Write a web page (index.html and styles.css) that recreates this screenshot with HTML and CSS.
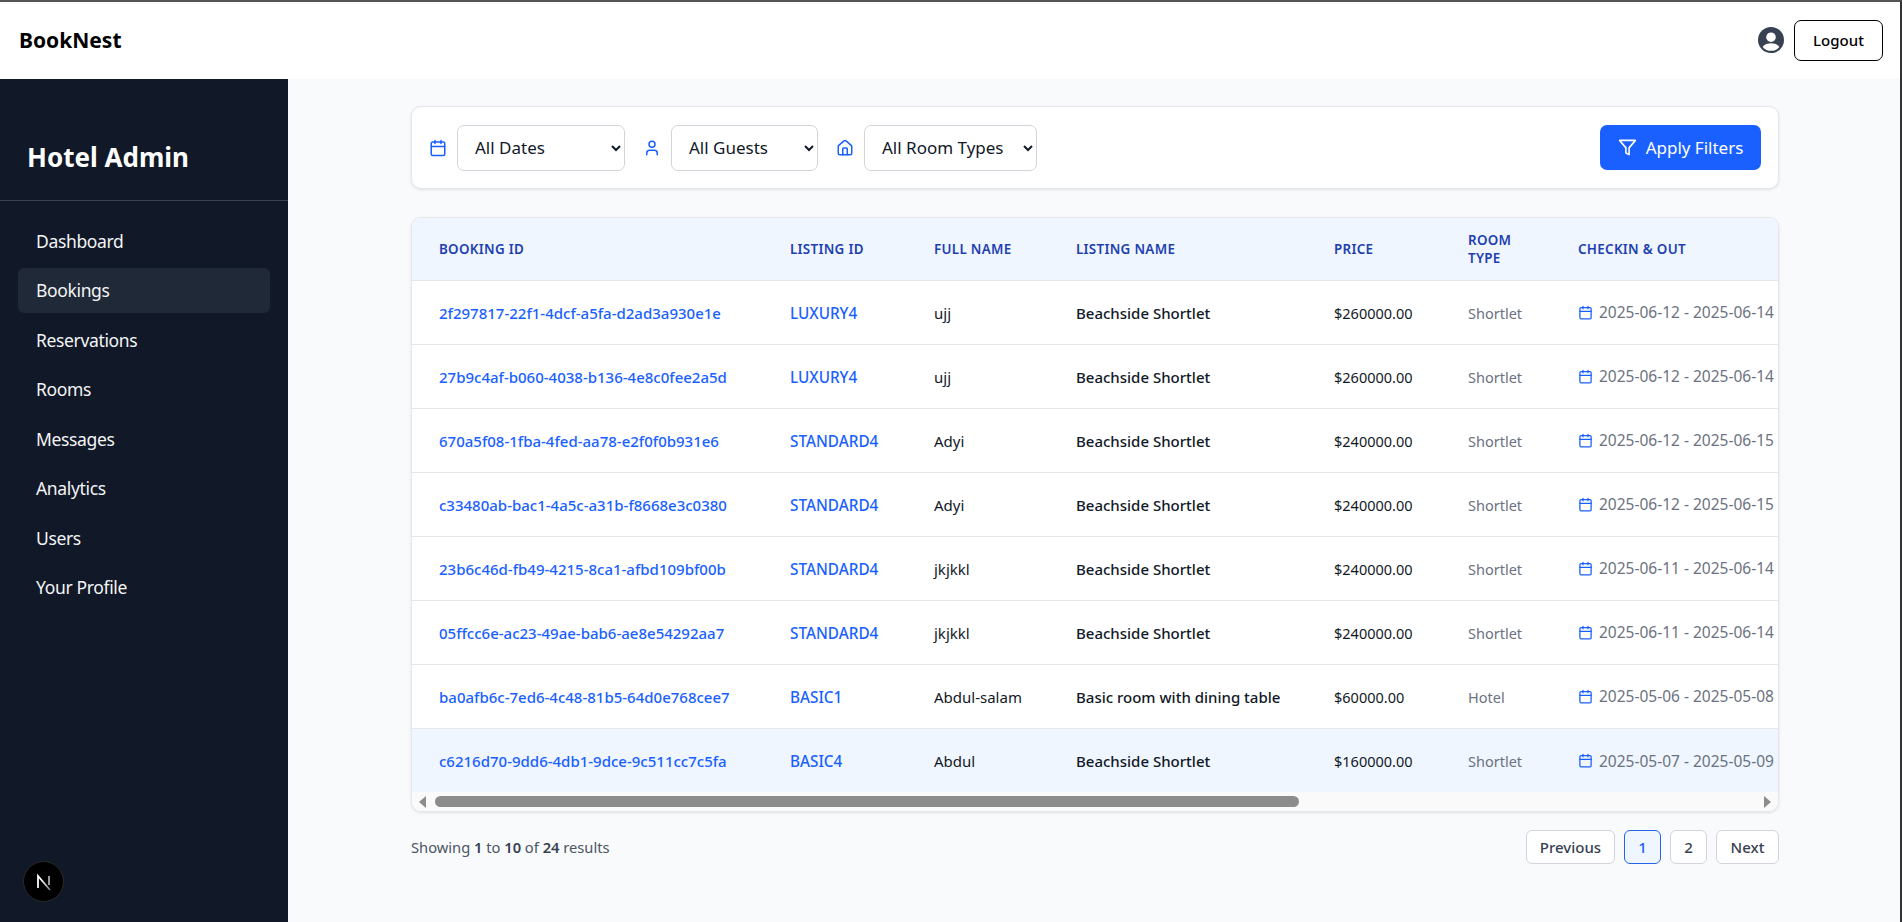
FILE: index.html
```html
<!DOCTYPE html>
<html lang="en">
<head>
<meta charset="utf-8">
<title>BookNest</title>
<link rel="stylesheet" href="styles.css">
</head>
<body>
<svg class="sprite" width="0" height="0" aria-hidden="true">
  <symbol id="i-cal" viewBox="0 0 24 24"><rect x="3" y="4" width="18" height="18" rx="2"/><path d="M16 2v4M8 2v4M3 10h18"/></symbol>
</svg>
<div class="app">
  <header class="topbar">
    <div class="brand">BookNest</div>
    <div class="topbar-right">
      <svg class="avatar" viewBox="0 0 24 24"><circle cx="12" cy="12" r="12" fill="#374151"/><circle cx="12" cy="9.4" r="4.4" fill="#fff"/><path d="M4.3 18.4C6 15.8 9 15 12 15s6 .8 7.7 3.4C17.8 20.8 15 22 12 22s-5.800-1.200-7.700-3.600z" fill="#fff"/></svg>
      <button class="logout">Logout</button>
    </div>
  </header>
  <div class="body">
    <aside class="sidebar">
      <div class="side-title">Hotel Admin</div>
      <nav class="side-nav">
        <a class="side-link">Dashboard</a>
        <a class="side-link active">Bookings</a>
        <a class="side-link">Reservations</a>
        <a class="side-link">Rooms</a>
        <a class="side-link">Messages</a>
        <a class="side-link">Analytics</a>
        <a class="side-link">Users</a>
        <a class="side-link">Your Profile</a>
      </nav>
      <div class="next-badge">
        <svg viewBox="0 0 24 24" width="24" height="24"><defs><linearGradient id="ng" x1="0" y1="0" x2="1" y2="1"><stop offset="0.3" stop-color="#fff"/><stop offset="1" stop-color="#777"/></linearGradient></defs><path d="M6 18V6l12 14" fill="none" stroke="url(#ng)" stroke-width="1.800"/><path d="M17 6v9" stroke="#aaa" stroke-width="1.800"/></svg>
      </div>
    </aside>
    <main class="main">
      <div class="content">
        <section class="filters">
          <svg class="ficon"><use href="#i-cal"/></svg>
          <select class="select sel-date"><option>All Dates</option></select>
          <svg class="ficon gap-left" viewBox="0 0 24 24"><path d="M19 21v-2a4 4 0 0 0-4-4H9a4 4 0 0 0-4 4v2"/><circle cx="12" cy="7" r="4"/></svg>
          <select class="select sel-guest"><option>All Guests</option></select>
          <svg class="ficon gap-left" viewBox="0 0 24 24"><path d="M15 21v-8a1 1 0 0 0-1-1h-4a1 1 0 0 0-1 1v8"/><path d="M3 10a2 2 0 0 1 .709-1.528l7-5.999a2 2 0 0 1 2.582 0l7 5.999A2 2 0 0 1 21 10v9a2 2 0 0 1-2 2H5a2 2 0 0 1-2-2z"/></svg>
          <select class="select sel-room"><option>All Room Types</option></select>
          <button class="apply">
            <svg class="apply-icon" viewBox="0 0 24 24"><path d="M22 3H2l8 9.460V19l4 2v-8.540z"/></svg>
            Apply Filters
          </button>
        </section>
        <section class="table-card">
          <div class="table-clip">
            <table class="table">
              <colgroup><col class="c1"><col class="c2"><col class="c3"><col class="c4"><col class="c5"><col class="c6"><col class="c7"></colgroup>
              <thead>
                <tr><th>Booking ID</th><th>Listing ID</th><th>Full Name</th><th>Listing Name</th><th>Price</th><th>Room Type</th><th>Checkin &amp; Out</th></tr>
              </thead>
              <tbody>
                <tr><td class="link bid">2f297817-22f1-4dcf-a5fa-d2ad3a930e1e</td><td class="link lid">LUXURY4</td><td>ujj</td><td class="strong">Beachside Shortlet</td><td class="price">$260000.00</td><td class="muted">Shortlet</td><td class="muted"><span class="dates"><svg class="cal"><use href="#i-cal"/></svg>2025-06-12 - 2025-06-14</span></td></tr>
                <tr><td class="link bid">27b9c4af-b060-4038-b136-4e8c0fee2a5d</td><td class="link lid">LUXURY4</td><td>ujj</td><td class="strong">Beachside Shortlet</td><td class="price">$260000.00</td><td class="muted">Shortlet</td><td class="muted"><span class="dates"><svg class="cal"><use href="#i-cal"/></svg>2025-06-12 - 2025-06-14</span></td></tr>
                <tr><td class="link bid">670a5f08-1fba-4fed-aa78-e2f0f0b931e6</td><td class="link lid">STANDARD4</td><td>Adyi</td><td class="strong">Beachside Shortlet</td><td class="price">$240000.00</td><td class="muted">Shortlet</td><td class="muted"><span class="dates"><svg class="cal"><use href="#i-cal"/></svg>2025-06-12 - 2025-06-15</span></td></tr>
                <tr><td class="link bid">c33480ab-bac1-4a5c-a31b-f8668e3c0380</td><td class="link lid">STANDARD4</td><td>Adyi</td><td class="strong">Beachside Shortlet</td><td class="price">$240000.00</td><td class="muted">Shortlet</td><td class="muted"><span class="dates"><svg class="cal"><use href="#i-cal"/></svg>2025-06-12 - 2025-06-15</span></td></tr>
                <tr><td class="link bid">23b6c46d-fb49-4215-8ca1-afbd109bf00b</td><td class="link lid">STANDARD4</td><td>jkjkkl</td><td class="strong">Beachside Shortlet</td><td class="price">$240000.00</td><td class="muted">Shortlet</td><td class="muted"><span class="dates"><svg class="cal"><use href="#i-cal"/></svg>2025-06-11 - 2025-06-14</span></td></tr>
                <tr><td class="link bid">05ffcc6e-ac23-49ae-bab6-ae8e54292aa7</td><td class="link lid">STANDARD4</td><td>jkjkkl</td><td class="strong">Beachside Shortlet</td><td class="price">$240000.00</td><td class="muted">Shortlet</td><td class="muted"><span class="dates"><svg class="cal"><use href="#i-cal"/></svg>2025-06-11 - 2025-06-14</span></td></tr>
                <tr><td class="link bid">ba0afb6c-7ed6-4c48-81b5-64d0e768cee7</td><td class="link lid">BASIC1</td><td>Abdul-salam</td><td class="strong">Basic room with dining table</td><td class="price">$60000.00</td><td class="muted">Hotel</td><td class="muted"><span class="dates"><svg class="cal"><use href="#i-cal"/></svg>2025-05-06 - 2025-05-08</span></td></tr>
                <tr class="hover"><td class="link bid">c6216d70-9dd6-4db1-9dce-9c511cc7c5fa</td><td class="link lid">BASIC4</td><td>Abdul</td><td class="strong">Beachside Shortlet</td><td class="price">$160000.00</td><td class="muted">Shortlet</td><td class="muted"><span class="dates"><svg class="cal"><use href="#i-cal"/></svg>2025-05-07 - 2025-05-09</span></td></tr>
              </tbody>
            </table>
          </div>
          <div class="scrollbar">
            <span class="arrow arrow-left"></span>
            <span class="thumb"></span>
            <span class="arrow arrow-right"></span>
          </div>
        </section>
        <div class="pager-row">
          <div class="results">Showing <b>1</b> to <b>10</b> of <b>24</b> results</div>
          <div class="pager">
            <button class="page-btn prev">Previous</button>
            <button class="page-btn num current">1</button>
            <button class="page-btn num">2</button>
            <button class="page-btn next">Next</button>
          </div>
        </div>
      </div>
    </main>
  </div>
</div>
</body>
</html>
```
FILE: styles.css
```css
* { box-sizing: border-box; }
html, body { margin: 0; height: 100%; overflow: hidden; }
body { font-family: "Noto Sans", "Open Sans", sans-serif; background: #f9fafb; color: #111827; }
.sprite { position: absolute; }
.app { height: 100vh; display: flex; flex-direction: column; border-top: 2px solid #555; border-right: 2px solid #333; }

.topbar { height: 77px; flex: none; background: #fff; display: flex; align-items: center; justify-content: space-between; padding: 0 17px 1px 19px; }
.brand { font-size: 21px; font-weight: 700; color: #000; }
.topbar-right { display: flex; align-items: center; gap: 10px; }
.avatar { width: 26px; height: 26px; display: block; }
.logout { width: 89px; height: 41px; background: #fff; border: 1px solid #000; border-radius: 7px; font: 500 15px "Noto Sans", sans-serif; color: #000; padding: 0; }

.body { flex: 1; display: flex; min-height: 0; }
.sidebar { width: 288px; flex: none; background: #111827; color: #fff; position: relative; }
.side-title { height: 122px; padding: 60px 0 0 27px; font-size: 26px; font-weight: 700; line-height: 36px; border-bottom: 1px solid #374151; }
.side-nav { padding: 17px 18px 0; display: flex; flex-direction: column; gap: 4.500px; }
.side-link { height: 45px; padding-left: 18px; display: flex; align-items: center; font-size: 17.500px; letter-spacing: -0.35px; color: #f3f4f6; border-radius: 6px; }
.side-link.active { background: #1f2937; }
.next-badge { position: absolute; left: 23px; bottom: 20px; width: 41px; height: 41px; border-radius: 50%; background: #000; border: 1px solid #2a2a2a; display: flex; align-items: center; justify-content: center; }

.main { flex: 1; min-width: 0; padding: 27px 0 0 2px; }
.content { width: 1368px; margin: 0 auto; }

.filters { height: 83px; background: #fff; border: 1px solid #e5e7eb; border-radius: 10px; box-shadow: 0 1px 3px rgba(0,0,0,.1); display: flex; align-items: center; padding: 0 17px 0 17px; gap: 10px; }
.ficon { width: 18px; height: 18px; fill: none; stroke: #1a5fff; stroke-width: 2; stroke-linecap: round; stroke-linejoin: round; flex: none; }
.gap-left { margin-left: 8px; }
.select { height: 46px; background: #fff; border: 1px solid #d1d5db; border-radius: 7px; padding-left: 13px; font: 400 17px "Noto Sans", sans-serif; color: #111827; }
.sel-date { width: 168px; }
.sel-guest { width: 147px; }
.sel-room { width: 173px; }
.apply { margin-left: auto; width: 161px; height: 45px; border: 0; border-radius: 7px; background: #1a5fff; color: #fff; font: 400 17px "Noto Sans", sans-serif; display: flex; align-items: center; justify-content: center; gap: 9px; padding: 0; }
.apply-icon { width: 19px; height: 19px; fill: none; stroke: #fff; stroke-width: 2; stroke-linejoin: round; stroke-linecap: round; }

.table-card { margin-top: 28px; background: #fff; border: 1px solid #e5e7eb; border-radius: 10px; box-shadow: 0 1px 3px rgba(0,0,0,.1); overflow: hidden; }
.table-clip { overflow: hidden; }
.table { border-collapse: collapse; table-layout: fixed; width: 1366px; font-size: 15px; }
.c1 { width: 351px; } .c2 { width: 144px; } .c3 { width: 142px; } .c4 { width: 258px; }
.c5 { width: 134px; } .c6 { width: 110px; } .c7 { width: 227px; }
th { height: 62px; padding: 1px 27px 0; background: #eff6ff; color: #1e40af; font-size: 13.400px; font-weight: 600; text-transform: uppercase; text-align: left; letter-spacing: 0.3px; line-height: 18px; border-bottom: 1px solid #e5e7eb; }
td { height: 64px; padding: 1px 0 0 27px; border-bottom: 1px solid #e5e7eb; white-space: nowrap; color: #111827; }
tbody tr:last-child td { border-bottom: 0; }
tr.hover td { background: #eff6ff; }
.link { color: #1a5fff; font-weight: 500; }
.lid { font-size: 15.300px; }
.strong { font-weight: 500; }
.price { font-size: 14.500px; }
td.muted { color: #6b7280; font-size: 14.500px; }
.dates { display: inline-flex; align-items: center; gap: 6px; font-size: 15.500px; }
.cal { width: 15px; height: 15px; fill: none; stroke: #1a5fff; stroke-width: 2; stroke-linecap: round; stroke-linejoin: round; flex: none; }

.scrollbar { height: 19px; background: #fafafa; display: flex; align-items: center; padding: 0 7px; }
.arrow { width: 0; height: 0; border-top: 6px solid transparent; border-bottom: 6px solid transparent; }
.arrow-left { border-right: 7px solid #8c8c8c; }
.arrow-right { border-left: 7px solid #8c8c8c; margin-left: auto; }
.thumb { width: 864px; height: 11px; margin-left: 9px; border-radius: 6px; background: #8c8c8c; }

.pager-row { margin-top: 18px; display: flex; align-items: center; justify-content: space-between; }
.results { font-size: 14.700px; color: #4b5563; }
.results b { font-weight: 600; color: #374151; }
.pager { display: flex; gap: 9px; }
.page-btn { height: 34px; background: #fff; border: 1px solid #d1d5db; border-radius: 6px; font: 500 15px "Noto Sans", sans-serif; color: #374151; padding: 0; }
.prev { width: 89px; } .num { width: 37px; } .next { width: 63px; }
.current { background: #eff6ff; border-color: #2563eb; color: #1a5fff; }
```
